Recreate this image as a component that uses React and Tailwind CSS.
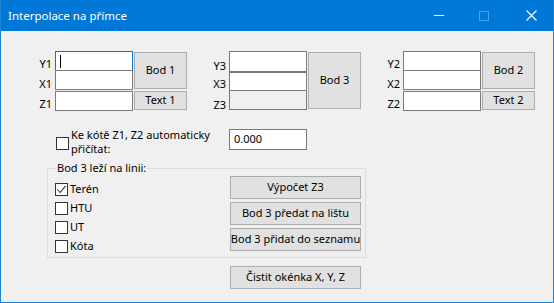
import React from "react";

function Field({ h = "h-[20px]", className = "", focused, disabled, value }) {
  return (
    <div
      className={`w-[78px] ${h} border ${
        focused ? "border-[#0078d7]" : "border-[#7a7a7a]"
      } ${disabled ? "bg-[#f0f0f0]" : "bg-white"} flex items-center pl-[4px] shrink-0 ${className}`}
    >
      {focused && <div className="w-[1px] h-[13px] bg-black" />}
      {value && <span>{value}</span>}
    </div>
  );
}

function Btn({ children, className = "" }) {
  return (
    <div
      className={`border border-[#adadad] bg-[#e1e1e1] flex items-center justify-center whitespace-nowrap shrink-0 ${className}`}
    >
      {children}
    </div>
  );
}

function Check({ checked, className = "" }) {
  return (
    <div className={`w-[13px] h-[13px] border border-[#333333] bg-white flex items-center justify-center shrink-0 ${className}`}>
      {checked && (
        <svg width="11" height="11" viewBox="0 0 11 11">
          <polyline points="1.5,5.5 4.2,8.5 9.5,1.8" fill="none" stroke="#333" strokeWidth="1.1" />
        </svg>
      )}
    </div>
  );
}

function Labels({ names, offsets }) {
  return (
    <div className="w-[20px] flex flex-col items-end pr-[3px]">
      {names.map((n, i) => (
        <div key={n} className="h-[20px] leading-[20px]" style={{ marginTop: offsets[i] }}>
          {n}
        </div>
      ))}
    </div>
  );
}

export default function App() {
  return (
    <div
      className="w-[554px] h-[303px] flex flex-col border-x border-b border-[#1883d7] text-[11px] text-black overflow-hidden"
      style={{ fontFamily: '"Noto Sans", "Liberation Sans", sans-serif' }}
    >
      <div className="h-[31px] bg-[#0078d7] flex items-center shrink-0 -mx-[1px]">
        <span className="ml-[8px] text-white text-[11.5px]">Interpolace na přímce</span>
        <div className="ml-auto flex items-center">
          <div className="w-[10px] h-[1px] bg-white mr-[35px]" />
          <div className="w-[10px] h-[10px] border border-[#4da1e3] mr-[37px]" />
          <svg width="11" height="11" viewBox="0 0 11 11" className="mr-[17px]">
            <path d="M0.5 0.5 L10.5 10.5 M10.5 0.5 L0.5 10.5" stroke="white" strokeWidth="1.1" />
          </svg>
        </div>
      </div>

      <div className="flex-1 bg-[#f0f0f0] flex flex-col">
        <div className="flex items-start h-[59px] mt-[20px] ml-[34px]">
          <div className="flex">
            <Labels names={["Y1", "X1", "Z1"]} offsets={[3, 0, 0]} />
            <div className="flex flex-col">
              <Field focused />
              <Field className="-mt-[1px]" />
              <Field className="mt-[1px]" />
            </div>
            <div className="flex flex-col ml-[1px] mt-[1px]">
              <Btn className="w-[53px] h-[37px]">Bod 1</Btn>
              <Btn className="w-[53px] h-[19px] mt-[2px]">Text 1</Btn>
            </div>
          </div>

          <div className="flex ml-[22px]">
            <Labels names={["Y3", "X3", "Z3"]} offsets={[5, -2, 1]} />
            <div className="flex flex-col">
              <Field h="h-[21px]" />
              <Field h="h-[19px]" />
              <Field disabled className="-mt-[1px]" />
            </div>
            <div className="flex flex-col ml-[1px] mt-[1px]">
              <Btn className="w-[53px] h-[57px]">Bod 3</Btn>
            </div>
          </div>

          <div className="flex ml-[22px]">
            <Labels names={["Y2", "X2", "Z2"]} offsets={[3, 0, 0]} />
            <div className="flex flex-col">
              <Field />
              <Field className="-mt-[1px]" />
              <Field className="mt-[1px]" />
            </div>
            <div className="flex flex-col ml-[1px] mt-[1px]">
              <Btn className="w-[53px] h-[37px]">Bod 2</Btn>
              <Btn className="w-[53px] h-[19px] mt-[2px]">Text 2</Btn>
            </div>
          </div>
        </div>

        <div className="flex items-start h-[26px] mt-[18px] ml-[55px]">
          <div className="w-[173px] flex items-center">
            <Check className="mt-[2px]" />
            <div className="ml-[2px] leading-[14px]">
              Ke kótě Z1, Z2 automaticky
              <br />
              přičítat:
            </div>
          </div>
          <Field h="h-[21px]" value="0.000" className="mt-[1px]" />
        </div>

        <fieldset className="ml-[46px] mt-[6px] w-[319px] h-[98px] border border-[#dcdcdc] flex">
          <legend className="ml-[8px] px-[1px] leading-[16px]">Bod 3 leží na linii:</legend>
          <div className="flex w-full">
            <div className="flex flex-col pl-[7px] pt-[4px] w-[182px]">
              {[
                ["Terén", true],
                ["HTU", false],
                ["UT", false],
                ["Kóta", false],
              ].map(([t, c]) => (
                <div key={t} className="h-[19px] flex items-center">
                  <Check checked={c} />
                  <span className="ml-[2px]">{t}</span>
                </div>
              ))}
            </div>
            <div className="flex flex-col gap-[3px]">
              <Btn className="w-[131px] h-[23px]">Výpočet Z3</Btn>
              <Btn className="w-[131px] h-[23px]">Bod 3 předat na lištu</Btn>
              <Btn className="w-[131px] h-[23px]">Bod 3 přidat do seznamu</Btn>
            </div>
          </div>
        </fieldset>

        <Btn className="ml-[229px] mt-[8px] w-[131px] h-[23px]">Čistit okénka X, Y, Z</Btn>
      </div>
    </div>
  );
}
